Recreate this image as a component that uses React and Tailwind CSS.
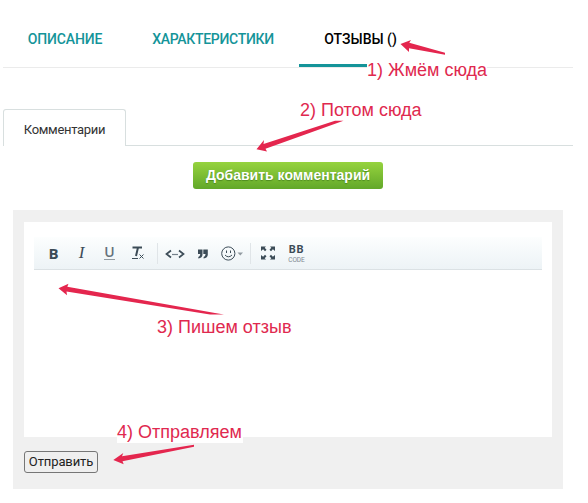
const tabs = [
  { label: 'ОПИСАНИЕ', width: 'w-[124px]', spacing: 'tracking-[-0.15px]' },
  { label: 'ХАРАКТЕРИСТИКИ', width: 'w-[172px]', spacing: 'tracking-[-0.3px]' },
  { label: 'ОТЗЫВЫ ()', width: 'w-[123px]', spacing: 'tracking-normal', active: true },
];

const notes = [
  { text: '1) Жмём сюда', place: 'left-[367px] top-[59px] w-[120px]' },
  { text: '2) Потом сюда', place: 'left-[300px] top-[99px] w-[122px]' },
  { text: '3) Пишем отзыв', place: 'left-[157px] top-[316px] w-[135px]' },
  { text: '4) Отправляем', place: 'left-[117px] top-[421px] w-[126px]' },
];

const arrows = [
  '400.5,44 411,40 409.3,42.7 445,52.7 445,54.8 409,48.2 409,52',
  '256.5,149.2 264,140 263.5,144 335,120.7 343.5,120.7 265.5,148.8 267,151.6',
  '58.5,288.3 68.5,283.8 67.3,286.7 215,313 224,314.5 210,314.5 66.5,291.5 67,295.2',
  '113.3,460 123.3,453 122,456.3 194,444.8 194,446.8 122.5,461.2 123.7,464.2',
];

function Toolbar() {
  return (
    <div className="flex h-[33px] items-center border-b border-[#dbe1e4] bg-linear-to-b from-[#fcfefe] to-[#edf3f6] text-[#3c4c57]">
      <span className="ml-[14px] w-[11px] text-center font-['Open_Sans',sans-serif] text-[15px] leading-[16px] font-bold">B</span>
      <span className="mb-px ml-[17px] w-[11px] text-center font-['Liberation_Serif',serif] text-[17px] leading-none italic">I</span>
      <span className="ml-[17px] flex h-[14px] w-[11px] justify-center border-b border-[#929ba1] font-['Open_Sans',sans-serif] text-[14px] leading-[12px] font-semibold text-[#65717a]">U</span>
      <svg className="ml-[16px]" width="14" height="14" viewBox="0 0 14 14" fill="none" stroke="currentColor">
        <path d="M1.5 1.5H11M7 1.5L5 10" strokeWidth="2" />
        <path d="M1 12.5H7M8.5 8.5l4 4M12.5 8.5l-4 4" />
      </svg>
      <span className="ml-[12px] h-[21px] w-px bg-[#e0e5e8]" />
      <svg className="mt-[2px] ml-[7px]" width="20" height="10" viewBox="0 0 20 10" fill="none" stroke="currentColor" strokeWidth="1.7">
        <path d="M6 1.5L1.5 5L6 8.5M14 1.5l4.5 3.5L14 8.5" />
        <path d="M7 5.5H13" strokeWidth="1.2" stroke="#74808a" />
      </svg>
      <svg className="mt-px ml-[13px]" width="10" height="10" viewBox="0 0 10 10" fill="currentColor">
        <path d="M0 0.5H4.5V5.5Q4.5 9 0.3 9.5V8Q2.2 7.3 2.2 5H0ZM5.3 0.5H9.8V5.5Q9.8 9 5.6 9.5V8Q7.5 7.3 7.5 5H5.3Z" />
      </svg>
      <svg className="mt-px ml-[13px]" width="22" height="15" viewBox="0 0 22 15">
        <circle cx="7.3" cy="7.5" r="6.6" fill="none" stroke="currentColor" strokeWidth="1" />
        <path d="M5.5 4.5V7M9.5 4.5V7M4 9q3.4 3.6 7 0" fill="none" stroke="currentColor" />
        <path d="M16.5 6.5h5.5l-2.7 3z" fill="#929ba1" />
      </svg>
      <span className="ml-[7px] h-[21px] w-px bg-[#e0e5e8]" />
      <svg className="ml-[10px]" width="14" height="14" viewBox="0 0 14 14" fill="currentColor">
        <path d="M0 .5H5L3.7 1.8 5.5 3.7 4 5.2 2.1 3.3 0 5ZM14 .5H9L10.3 1.8 8.5 3.7 10 5.2 11.9 3.3 14 5ZM0 13.5H5L3.7 12.2 5.5 10.3 4 8.8 2.1 10.7 0 9ZM14 13.5H9L10.3 12.2 8.5 10.3 10 8.8 11.9 10.7 14 9Z" />
      </svg>
      <span className="mt-[2px] ml-[13px] flex w-[17px] flex-col items-center font-['Roboto',sans-serif]">
        <span className="text-[11px] leading-[12px] font-bold tracking-[0.8px]">BB</span>
        <span className="text-[6.5px] leading-[8px] text-[#7d8991]">CODE</span>
      </span>
    </div>
  );
}

export default function App() {
  return (
    <div className="relative h-[503px] w-[588px] overflow-hidden bg-white pl-[3px] font-['Roboto',sans-serif]">
      <nav className="flex h-[68px] w-[570px] border-b border-[#ebebeb] pt-[12px] text-[14px] font-medium">
        {tabs.map((tab) => (
          <div
            key={tab.label}
            className={`${tab.width} ${tab.spacing} flex h-[55px] items-center justify-center border-b-3 pt-[2px] whitespace-nowrap ${tab.active ? 'border-[#149499] text-black' : 'border-transparent text-[#149499]'}`}
          >
            {tab.label}
          </div>
        ))}
      </nav>

      <div className="mt-[41px] flex h-[37px] w-[570px]">
        <div className="flex w-[123px] items-center justify-center rounded-t-[3px] border border-b-0 border-[#d8dfdf] pt-[3px] text-[13px] tracking-[-0.3px] text-[#333]">
          Комментарии
        </div>
        <div className="flex-1 border-b border-[#d8dfdf]" />
      </div>

      <button className="mt-[16px] ml-[190px] block h-[27px] w-[190px] rounded-[3px] bg-linear-to-b from-[#96d33e] to-[#62a829] text-center font-['Liberation_Sans',sans-serif] text-[14px] leading-[27px] font-bold whitespace-nowrap text-white [text-shadow:0_1px_1px_#4d8a20]">
        Добавить комментарий
      </button>

      <div className="mt-[21px] ml-[10px] h-[279px] w-[550px] bg-[#f0f0f0] px-[11px] pt-[12px]">
        <div className="h-[215px] bg-white px-[10px] pt-[15px]">
          <Toolbar />
        </div>
        <button className="mt-[14px] block h-[22px] w-[74px] rounded-[3px] border border-[#767676] bg-[#efefef] text-[13px] leading-[20px] tracking-[-0.1px] whitespace-nowrap text-[#222]">
          Отправить
        </button>
      </div>

      {notes.map((note) => (
        <div
          key={note.text}
          className={`absolute ${note.place} h-[22px] bg-white font-['Liberation_Sans',sans-serif] text-[18px] leading-[22px] whitespace-nowrap text-[#e0294f]`}
        >
          {note.text}
        </div>
      ))}
      <svg className="pointer-events-none absolute top-0 left-0" width="588" height="503" fill="#e4264e">
        {arrows.map((points) => (
          <polygon key={points} points={points} />
        ))}
      </svg>
    </div>
  );
}
